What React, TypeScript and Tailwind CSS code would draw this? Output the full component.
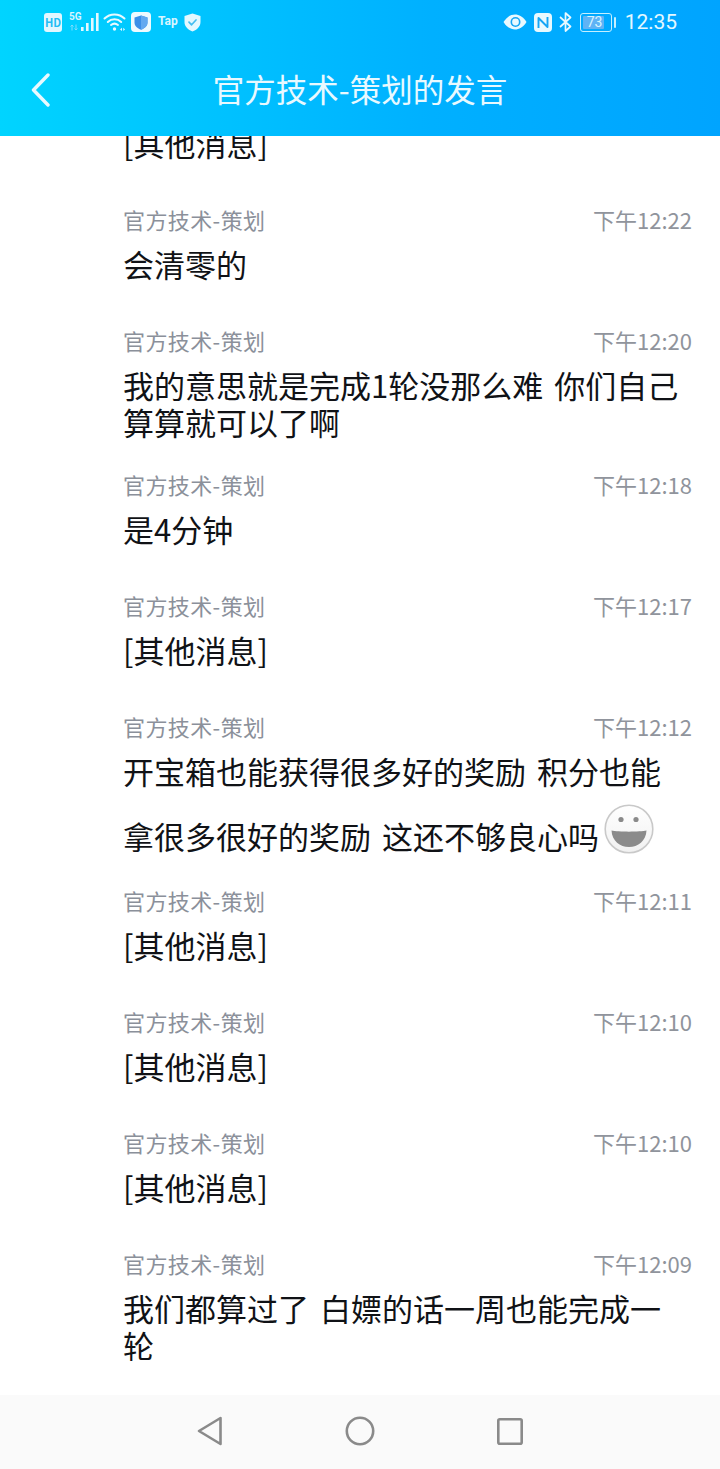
import React from 'react';

const FONT = "font-['Noto_Sans_CJK_SC','Noto_Sans',sans-serif]";

interface Message {
  time: string;
  lines: string[];
}

const messages: Message[] = [
  { time: '下午12:22', lines: ['会清零的'] },
  { time: '下午12:20', lines: ['我的意思就是完成1轮没那么难 你们自己', '算算就可以了啊'] },
  { time: '下午12:18', lines: ['是4分钟'] },
  { time: '下午12:17', lines: ['[其他消息]'] },
];

const laterMessages: Message[] = [
  { time: '下午12:11', lines: ['[其他消息]'] },
  { time: '下午12:10', lines: ['[其他消息]'] },
  { time: '下午12:10', lines: ['[其他消息]'] },
  { time: '下午12:09', lines: ['我们都算过了 白嫖的话一周也能完成一', '轮'] },
];

const Grin = () => (
  <svg width="50" height="50" viewBox="0 0 50 50" className="block shrink-0">
    <defs>
      <linearGradient id="grinFace" x1="0" y1="0" x2="0" y2="1">
        <stop offset="0" stopColor="#ffffff" />
        <stop offset="1" stopColor="#f1f1f1" />
      </linearGradient>
    </defs>
    <circle cx="25" cy="25" r="23.8" fill="url(#grinFace)" stroke="#c9c9c9" strokeWidth="1.6" />
    <circle cx="17" cy="15.5" r="2.6" fill="#8a8a8a" />
    <circle cx="32" cy="15.5" r="2.6" fill="#8a8a8a" />
    <path d="M7.5 26.5 C14 28 36 28 42.5 26.5 C42 37 34 43 25 43 C16 43 8 37 7.5 26.5 Z" fill="#8b8b8b" />
  </svg>
);

const RowHead = ({ time }: { time: string }) => (
  <div className="flex h-[30px] items-start justify-between text-[22px] leading-[26px] text-[#8b909a]">
    <span className="tracking-[0.4px]">官方技术-策划</span>
    <span className="text-[#90949c]">{time}</span>
  </div>
);

function Row({ time, lines }: Message) {
  return (
    <div className="pl-[123px] pr-[28px] pb-[31px]">
      <RowHead time={time} />
      <div className="mt-[9px] min-h-[51px] text-[31px] leading-[37px] text-[#101216] [word-spacing:4px]">
        {lines.map((l) => (
          <div key={l} className="whitespace-nowrap">{l}</div>
        ))}
      </div>
    </div>
  );
}

const StatusLeft = () => (
  <div className="flex items-center">
    <div className="flex h-[19px] w-[18px] items-center justify-center rounded-[3px] bg-[#e2f7ff] text-[11px] font-bold leading-none text-[#22bdf5]">HD</div>
    <div className="ml-[7px] flex h-[20px] w-[32px] items-start">
      <div className="flex w-[10px] flex-col">
        <span className="font-['Roboto',sans-serif] text-[10px] font-bold leading-[10px] text-[#d8f5ff]">5G</span>
        <svg width="10" height="7" viewBox="0 0 10 7" className="mt-[2px]" fill="none" stroke="#7fdcfb" strokeWidth="1">
          <path d="M3 6.5 V1 M1.5 2.5 L3 1 L4.5 2.5 M7 0.5 V6 M5.5 4.5 L7 6 L8.5 4.5" />
        </svg>
      </div>
      <svg width="20" height="20" viewBox="0 0 20 20" className="ml-[1px]">
        <rect x="1" y="15" width="2.6" height="4" fill="#e4f8ff" />
        <rect x="6" y="11" width="2.6" height="8" fill="#e4f8ff" />
        <rect x="11" y="6" width="2.6" height="13" fill="#e4f8ff" />
        <rect x="16" y="1" width="2.6" height="18" fill="#e4f8ff" />
      </svg>
    </div>
    <svg width="23" height="20" viewBox="0 0 23 20" className="ml-[2px]" fill="none" stroke="#e8f9ff" strokeLinecap="round">
      <path d="M1.5 6.5 C7 1 16 1 21.5 6.5" strokeWidth="2" />
      <path d="M4.8 10 C8.5 6.4 14.5 6.4 18.2 10" strokeWidth="2" />
      <path d="M8 13 C10 11.4 13 11.4 15 13" strokeWidth="2" />
      <circle cx="11.5" cy="17" r="1.7" fill="#e8f9ff" stroke="none" />
      <path d="M17 17.5 L19 15.8 V19 Z M22 17.5 L20.3 15.8 V19 Z" fill="#e8f9ff" stroke="none" />
    </svg>
    <div className="ml-[5px] flex h-[20px] w-[20px] items-center justify-center rounded-[4px] bg-[#eefaff]">
      <svg width="14" height="15" viewBox="0 0 14 15">
        <path d="M7 0.5 L13.5 2.5 V7.5 C13.5 11 10.5 13.5 7 14.8 C3.5 13.5 0.5 11 0.5 7.5 V2.5 Z" fill="#3b8fe8" />
        <path d="M7 0.5 L13.5 2.5 V7.5 C13.5 11 10.5 13.5 7 14.8 Z" fill="#63a9f0" />
      </svg>
    </div>
    <span className="ml-[7px] mb-[3px] w-[20px] font-['Roboto',sans-serif] text-[12px] font-bold leading-none text-[#d8f5ff]">Tap</span>
    <svg width="17" height="19" viewBox="0 0 17 19" className="ml-[6px]">
      <path d="M8.5 0.5 L16.5 3 V9 C16.5 13.5 13 16.8 8.5 18.5 C4 16.8 0.5 13.5 0.5 9 V3 Z" fill="#e4f8ff" />
      <path d="M5 9.2 L7.6 11.8 L12 7" fill="none" stroke="#45bdf0" strokeWidth="1.7" strokeLinecap="round" strokeLinejoin="round" />
    </svg>
  </div>
);

const StatusRight = () => (
  <div className="flex items-center">
    <svg width="24" height="16" viewBox="0 0 24 16">
      <path d="M0.5 8 C4 2.5 8 0.5 12 0.5 C16 0.5 20 2.5 23.5 8 C20 13.5 16 15.5 12 15.5 C8 15.5 4 13.5 0.5 8 Z" fill="#e8f9ff" />
      <circle cx="12.5" cy="8" r="5" fill="#14a5f5" />
      <circle cx="12.5" cy="8" r="3.4" fill="#e8f9ff" />
    </svg>
    <svg width="18" height="19" viewBox="0 0 18 19" className="ml-[7px]">
      <rect x="0" y="0" width="18" height="19" rx="4" fill="#e8f9ff" />
      <path d="M4.5 15 V5 L13.5 14 V4" fill="none" stroke="#14a5f5" strokeWidth="1.9" strokeLinejoin="round" />
    </svg>
    <svg width="13" height="20" viewBox="0 0 13 20" className="ml-[7px]" fill="none" stroke="#e8f9ff" strokeWidth="1.7" strokeLinejoin="round">
      <path d="M1 5 L11.5 14.5 L6.5 19 V1 L11.5 5.5 L1 15" />
    </svg>
    <div className="ml-[8px] flex items-center">
      <div className="flex h-[19px] w-[32px] items-center rounded-[3px] border-[1.5px] border-[#c5efff] p-[2px]">
        <div className="flex h-full w-[21px] items-center rounded-[1px] bg-[#5fb3f5]">
          <span className="ml-[4px] font-['Roboto',sans-serif] text-[14px] leading-none text-[#d8f5ff]">73</span>
        </div>
      </div>
      <div className="ml-[2px] h-[11px] w-[2px] rounded-[1px] bg-[#c5efff]" />
    </div>
    <span className="ml-[9px] font-['Roboto',sans-serif] text-[21px] leading-none text-[#e4f8ff]">12:35</span>
  </div>
);

export default function App() {
  return (
    <div className={`flex h-[1469px] w-[720px] flex-col overflow-hidden bg-white ${FONT}`}>
      <header className="relative z-10 h-[136px] shrink-0 bg-gradient-to-r from-[#00d4ff] via-[#00b0ff] via-60% to-[#00a4ff]">
        <div className="flex h-[44px] items-center justify-between pl-[44px] pr-[43px]">
          <StatusLeft />
          <StatusRight />
        </div>
        <div className="relative mt-[5px] flex h-[80px] items-center justify-center">
          <svg width="20" height="34" viewBox="0 0 20 34" className="absolute left-[31px] top-[24px]" fill="none" stroke="#e8f9ff" strokeWidth="3.4" strokeLinecap="round" strokeLinejoin="round">
            <path d="M17 2 L2.5 17 L17 32" />
          </svg>
          <h1 className="text-[31.5px] font-normal leading-none text-[#e8f9ff]">官方技术-策划的发言</h1>
        </div>
      </header>

      <main className="min-h-0 flex-1 overflow-hidden">
        <div className="-mt-[12px] pl-[123px] pb-[31px]">
          <div className="min-h-[51px] text-[31px] leading-[37px] text-[#101216]">[其他消息]</div>
        </div>
        {messages.map((m, i) => (
          <Row key={i} {...m} />
        ))}
        <div className="pl-[123px] pr-[28px] pb-[31px]">
          <RowHead time="下午12:12" />
          <div className="mt-[9px] text-[31px] leading-[37px] text-[#101216] [word-spacing:4px]">
            <div className="whitespace-nowrap">开宝箱也能获得很多好的奖励 积分也能</div>
            <div className="flex h-[67px] items-end whitespace-nowrap">
              <span className="mb-[2px]">拿很多很好的奖励 这还不够良心吗</span>
              <span className="mb-[2px] ml-[5px]"><Grin /></span>
            </div>
          </div>
        </div>
        {laterMessages.map((m, i) => (
          <Row key={i} {...m} />
        ))}
      </main>

      <nav className="flex h-[74px] shrink-0 items-center bg-[#fafafa] pb-[2px] pl-[197px]">
        <svg width="26" height="30" viewBox="0 0 26 30" fill="none" stroke="#8a8a8a" strokeWidth="2.6" strokeLinejoin="round">
          <path d="M23.5 2 V28 L2 15 Z" />
        </svg>
        <svg width="30" height="30" viewBox="0 0 30 30" fill="none" stroke="#8a8a8a" strokeWidth="2.6" className="ml-[122px]">
          <circle cx="15" cy="15" r="13.2" />
        </svg>
        <svg width="26" height="27" viewBox="0 0 26 27" fill="none" stroke="#8a8a8a" strokeWidth="2.6" strokeLinejoin="round" className="ml-[122px]">
          <rect x="1.3" y="1.3" width="23.4" height="24.4" rx="1.5" />
        </svg>
      </nav>
    </div>
  );
}
